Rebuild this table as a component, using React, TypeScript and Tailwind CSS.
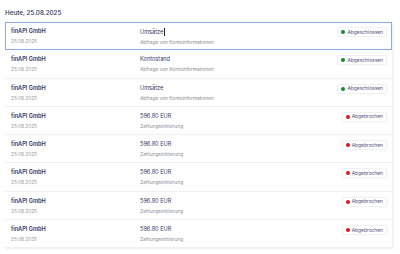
import React from "react"

type Row = {
  name: string
  date: string
  title: string
  sub: string
  status: "ok" | "fail"
}

const rows: Row[] = [
  { name: "finAPI GmbH", date: "25.08.2025", title: "Umsätze", sub: "Abfrage von Kontoinformationen", status: "ok" },
  { name: "finAPI GmbH", date: "25.08.2025", title: "Kontostand", sub: "Abfrage von Kontoinformationen", status: "ok" },
  { name: "finAPI GmbH", date: "25.08.2025", title: "Umsätze", sub: "Abfrage von Kontoinformationen", status: "ok" },
  { name: "finAPI GmbH", date: "25.08.2025", title: "596.80 EUR", sub: "Zahlungsinitiierung", status: "fail" },
  { name: "finAPI GmbH", date: "25.08.2025", title: "596.80 EUR", sub: "Zahlungsinitiierung", status: "fail" },
  { name: "finAPI GmbH", date: "25.08.2025", title: "596.80 EUR", sub: "Zahlungsinitiierung", status: "fail" },
  { name: "finAPI GmbH", date: "25.08.2025", title: "596.80 EUR", sub: "Zahlungsinitiierung", status: "fail" },
  { name: "finAPI GmbH", date: "25.08.2025", title: "596.80 EUR", sub: "Zahlungsinitiierung", status: "fail" },
]

function Badge({ status }: { status: Row["status"] }) {
  const ok = status === "ok"
  return (
    <div className="flex items-center gap-[2px] rounded-[2px] border border-[#f1f1f3] bg-white px-[3px] h-[10px] shadow-[0_0_2px_rgba(0,0,0,0.05)]">
      <span className={ok ? "w-[4px] h-[4px] rounded-full bg-[#138a2c]" : "w-[4px] h-[4px] rounded-full bg-[#e3141b]"} />
      <span className="text-[4.9px] leading-none text-[#50507a]">
        {ok ? "Abgeschlossen" : "Abgebrochen"}
      </span>
    </div>
  )
}

export default function App() {
  return (
    <div className="w-[400px] h-[254px] bg-white font-['Inter',sans-serif] overflow-hidden">
      <div className="pt-[9px] pl-[5px] h-[22px] text-[6.3px] font-medium text-[#2f3160]">
        Heute, 25.08.2025
      </div>
      <div className="ml-[5px] w-[387px] shadow-[1px_1px_2px_rgba(0,0,0,0.08)]">
        {rows.map((r, i) => (
          <div
            key={i}
            className={
              i === 0
                ? "h-[28.3px] flex items-start border border-[#8eaae6] bg-white pl-[5px] pr-[4px]"
                : "h-[28.3px] flex items-start border-b border-[#f0f0f0] bg-white pl-[6px] pr-[5px]"
            }
          >
            <div className={i === 0 ? "w-[129px] pt-[5px]" : "w-[129px] pt-[6px]"}>
              <div className="text-[5.6px] leading-[7px] font-semibold text-[#2f3160]">{r.name}</div>
              <div className="mt-[3px] text-[4.8px] leading-[6px] text-[#9b9ba3]">{r.date}</div>
            </div>
            <div className={i === 0 ? "flex-1 pt-[5px]" : "flex-1 pt-[6px]"}>
              <div className="flex items-center text-[5.6px] leading-[7px] text-[#34366a]">
                {r.title}
                {i === 0 && <span className="ml-[1px] w-px h-[8px] bg-[#222]" />}
              </div>
              <div className="mt-[3px] text-[4.8px] leading-[6px] text-[#8d8d96]">{r.sub}</div>
            </div>
            <div className={i === 0 ? "pt-[4px]" : "pt-[5px]"}>
              <Badge status={r.status} />
            </div>
          </div>
        ))}
      </div>
    </div>
  )
}
